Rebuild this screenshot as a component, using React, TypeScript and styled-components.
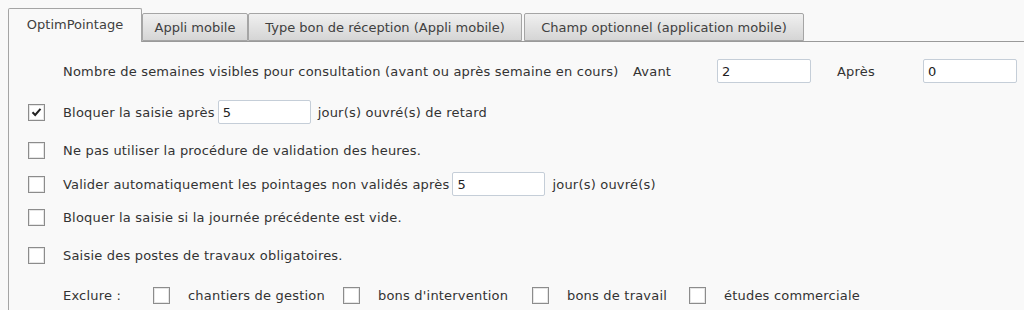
import styled, { createGlobalStyle } from "styled-components";

const GlobalStyle = createGlobalStyle`
    body {
        margin: 0;
        background-color: #f9f9f9;
        font-family: "DejaVu Sans", Verdana, sans-serif;
        font-size: 13px;
        letter-spacing: 0.2px;
        color: #333333;
    }
`;

const Page = styled.div`
    padding: 8px 0 0 8px;
`;

const TabBar = styled.div`
    display: flex;
    align-items: flex-end;
    border-bottom: 1px solid #9a9a9a;
    height: 33px;
`;

const Tab = styled.div<{ $active?: boolean; $gap?: number; $w: number }>`
    display: flex;
    align-items: center;
    justify-content: center;
    box-sizing: border-box;
    width: ${(p) => p.$w}px;
    margin-left: ${(p) => p.$gap ?? 0}px;
    white-space: nowrap;
    letter-spacing: 0;
    border: 1px solid #a5a5a5;
    border-top-left-radius: 2px;
    border-top-right-radius: 2px;
    color: #404040;
    height: ${(p) => (p.$active ? 34 : 28)}px;
    margin-bottom: ${(p) => (p.$active ? -1 : 0)}px;
    background: ${(p) => (p.$active ? "#f9f9f9" : "linear-gradient(#f0f0f0, #d5d5d5)")};
    border-bottom: ${(p) => (p.$active ? "none" : "1px solid #a5a5a5")};
    padding-bottom: ${(p) => (p.$active ? 2 : 0)}px;
`;

const Panel = styled.div`
    border-left: 1px solid #a5a5a5;
    padding-top: 8px;
    height: 270px;
`;

const Row = styled.div<{ $h: number; $indent?: number }>`
    display: flex;
    align-items: center;
    height: ${(p) => p.$h}px;
    padding-left: ${(p) => p.$indent ?? 19}px;
    white-space: nowrap;
`;

const Box = styled.span`
    display: inline-flex;
    align-items: center;
    justify-content: center;
    box-sizing: border-box;
    width: 17px;
    height: 17px;
    border: 1px solid #8c8c8c;
    box-shadow: inset 0 0 0 1px #e6e6e6;
    background: #ffffff;
    margin-right: 18px;
    flex-shrink: 0;
`;

const Field = styled.input<{ $w?: number }>`
    box-sizing: border-box;
    width: ${(p) => p.$w ?? 93}px;
    height: 24px;
    border: 1px solid #c5ced8;
    border-radius: 2px;
    background: #ffffff;
    padding: 0 4px;
    margin: 0 7px 0 3px;
    font: inherit;
    color: #222222;
    outline: none;
`;

const Label = styled.span<{ $w?: number }>`
    display: inline-block;
    width: ${(p) => (p.$w ? `${p.$w}px` : "auto")};
`;

const Check = ({ checked }: { checked?: boolean }) => (
    <Box>
        {checked && (
            <svg width="11" height="10" viewBox="0 0 11 10">
                <path d="M1.5 5.2 L4.2 8 L9.5 1.8" fill="none" stroke="#222" strokeWidth="2" />
            </svg>
        )}
    </Box>
);

const App = () => {
    return (
        <Page>
            <GlobalStyle />
            <TabBar>
                <Tab $active $w={134}>OptimPointage</Tab>
                <Tab $w={106}>Appli mobile</Tab>
                <Tab $w={274}>Type bon de réception (Appli mobile)</Tab>
                <Tab $w={280} $gap={2}>Champ optionnel (application mobile)</Tab>
            </TabBar>
            <Panel>
                <Row $h={42} $indent={54}>
                    <Label $w={570}>Nombre de semaines visibles pour consultation (avant ou après semaine en cours)</Label>
                    <Label $w={81}>Avant</Label>
                    <Field $w={94} defaultValue="2" />
                    <Label $w={19} />
                    <Label $w={83}>Après</Label>
                    <Field $w={94} defaultValue="0" />
                </Row>
                <Row $h={40}>
                    <Check checked />
                    <Label>Bloquer la saisie après</Label>
                    <Field defaultValue="5" />
                    <Label>jour(s) ouvré(s) de retard</Label>
                </Row>
                <Row $h={36}>
                    <Check />
                    <Label>Ne pas utiliser la procédure de validation des heures.</Label>
                </Row>
                <Row $h={32}>
                    <Check />
                    <Label>Valider automatiquement les pointages non validés après</Label>
                    <Field defaultValue="5" />
                    <Label>jour(s) ouvré(s)</Label>
                </Row>
                <Row $h={34}>
                    <Check />
                    <Label>Bloquer la saisie si la journée précédente est vide.</Label>
                </Row>
                <Row $h={42}>
                    <Check />
                    <Label>Saisie des postes de travaux obligatoires.</Label>
                </Row>
                <Row $h={38} $indent={54}>
                    <Label $w={90}>Exclure :</Label>
                    <Check />
                    <Label $w={155}>chantiers de gestion</Label>
                    <Check />
                    <Label $w={154}>bons d'intervention</Label>
                    <Check />
                    <Label $w={122}>bons de travail</Label>
                    <Check />
                    <Label>études commerciale</Label>
                </Row>
            </Panel>
        </Page>
    );
};

export default App;
